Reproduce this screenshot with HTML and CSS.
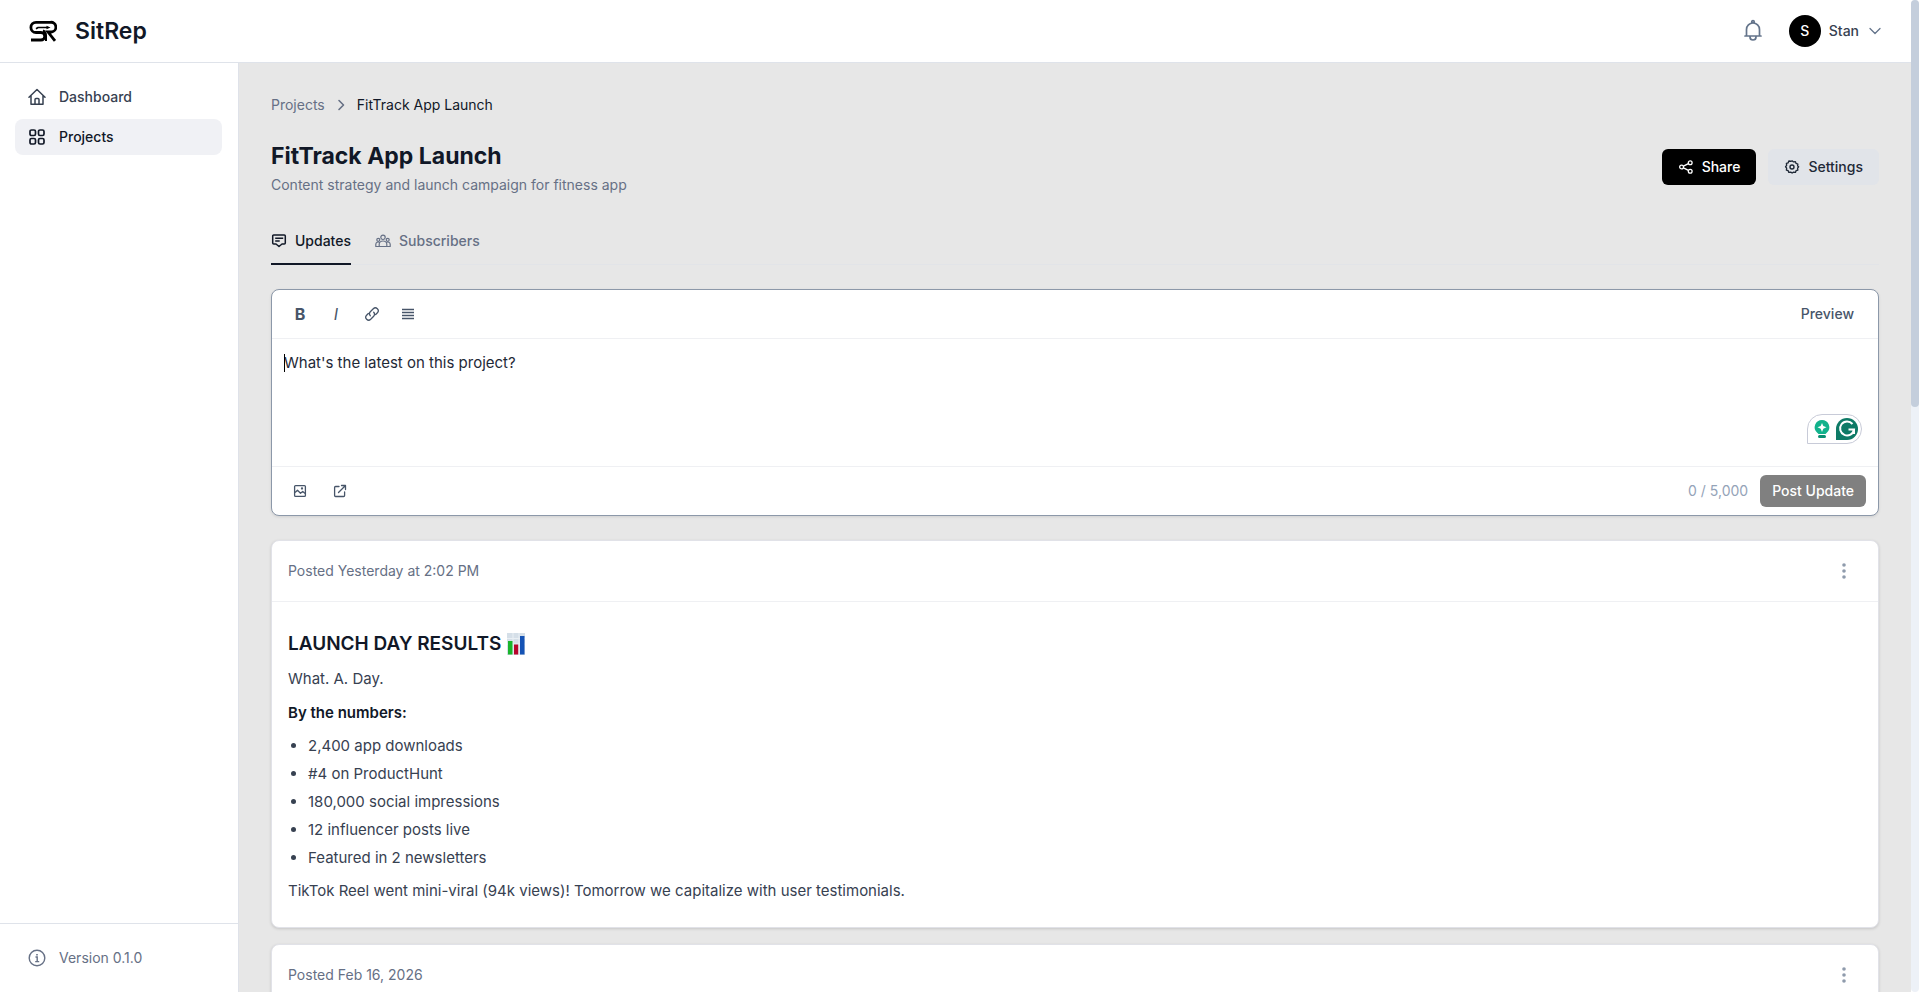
FILE: index.html
```html
<!DOCTYPE html>
<html lang="en">
<head>
    <meta charset="UTF-8">
    <meta name="viewport" content="width=device-width, initial-scale=1.0">
    <title>FitTrack App Launch - SitRep</title>
    <link rel="stylesheet" href="styles.css">
</head>
<body>
    <div class="app">
        <header class="topbar">
            <a class="brand" href="#">
                <svg class="logo" width="28" height="24" viewBox="0 0 28 24" fill="none" stroke="#000" aria-hidden="true">
                    <path d="M2 21h10a3.600 3.600 0 0 0 0-7.500H7a5 5 0 0 1 0-10.200H21.500a4.800 4.800 0 0 1 1 9.700H19L26 21.800" stroke-width="2.800"/>
                    <path d="M14 11.500a5.500 5.500 0 0 1 3 5V22" stroke-width="2"/>
                    <path d="M7 9.800l2-1.300h9" stroke-width="1.700"/>
                    <path d="M17.500 6.800l4 1.700-4 1.700z" fill="#000" stroke="none"/>
                </svg>
                <span class="brand-name">SitRep</span>
            </a>
            <div class="user-area">
                <button class="icon-btn bell" aria-label="Notifications">
                    <svg width="24" height="24" viewBox="0 0 24 24" fill="none" stroke="currentColor" stroke-width="1.700" stroke-linecap="round" stroke-linejoin="round"><path d="M4 17h16M5.500 17v-6.500a6.500 6.500 0 0 1 13 0V17M10.800 4V2.800a1.200 1.200 0 0 1 2.400 0V4M9 17.500v.5a3 3 0 0 0 6 0v-.5"/></svg>
                </button>
                <button class="user-menu">
                    <span class="avatar">S</span>
                    <span>Stan</span>
                    <svg class="caret-down" width="12" height="12" viewBox="0 0 12 12" fill="none" stroke="currentColor" stroke-width="1.300" stroke-linecap="round" stroke-linejoin="round"><path d="M1 3.500l5 5 5-5"/></svg>
                </button>
            </div>
        </header>
        <div class="layout">
            <aside class="sidebar">
                <nav class="nav">
                    <a class="nav-link" href="#">
                        <svg width="18" height="18" viewBox="0 0 18 18" fill="none" stroke="currentColor" stroke-width="1.500" stroke-linecap="round" stroke-linejoin="round"><path d="M1 9.200L9 1.500l8 7.700M3 7.500v8.800h12V7.500M7 16v-4.500a1 1 0 0 1 1-1h2a1 1 0 0 1 1 1V16"/></svg>
                        <span>Dashboard</span>
                    </a>
                    <a class="nav-link active" href="#">
                        <svg width="18" height="18" viewBox="0 0 18 18" fill="none" stroke="currentColor" stroke-width="1.700"><rect x="2" y="2" width="5.500" height="5.500" rx="1.500"/><rect x="10.500" y="2" width="5.500" height="5.500" rx="1.500"/><rect x="2" y="10.500" width="5.500" height="5.500" rx="1.500"/><rect x="10.500" y="10.500" width="5.500" height="5.500" rx="1.500"/></svg>
                        <span>Projects</span>
                    </a>
                </nav>
                <div class="version">
                    <svg width="18" height="18" viewBox="0 0 18 18" fill="none" stroke="currentColor" stroke-width="1.400"><circle cx="9" cy="9" r="7.800"/><path d="M7.500 8h1.700v4.500M7.200 12.600h4"/><path d="M9 5v1.600" stroke-width="1.600"/></svg>
                    <span>Version 0.1.0</span>
                </div>
            </aside>
            <main class="content">
                <nav class="breadcrumb" aria-label="Breadcrumb">
                    <a href="#">Projects</a>
                    <svg width="12" height="12" viewBox="0 0 12 12" fill="none" stroke="currentColor" stroke-width="1.600" stroke-linecap="round" stroke-linejoin="round"><path d="M4 1.500l4.500 4.500L4 10.500"/></svg>
                    <span class="current">FitTrack App Launch</span>
                </nav>
                <div class="page-head">
                    <div>
                        <h1>FitTrack App Launch</h1>
                        <p class="description">Content strategy and launch campaign for fitness app</p>
                    </div>
                    <div class="actions">
                        <button class="btn btn-dark">
                            <svg width="16" height="16" viewBox="0 0 16 16" fill="none" stroke="currentColor" stroke-width="1.300"><circle cx="3.600" cy="8" r="1.900"/><circle cx="12.200" cy="3.700" r="1.900"/><circle cx="12.200" cy="12.300" r="1.900"/><path d="M5.400 7.100l5-2.500M5.400 8.900l5 2.500"/></svg>
                            Share
                        </button>
                        <button class="btn btn-light">
                            <svg width="16" height="16" viewBox="0 0 16 16" fill="none" stroke="currentColor" stroke-width="1.400" stroke-linejoin="round"><circle cx="8" cy="8" r="2"/><path d="M8 1.700l1.500 1.200 2-.3.700 1.900 1.900.700-.3 2L15 8l-1.200 1.500.3 2-1.900.7-.7 1.900-2-.3L8 14.700l-1.500-1-2 .4-.7-1.900-1.900-.7.300-2L1 8l1.200-1.500-.3-2 1.900-.7.700-1.900 2 .3z" transform="translate(.6 .2) scale(.94)"/></svg>
                            Settings
                        </button>
                    </div>
                </div>
                <div class="tabs" role="tablist">
                    <button class="tab active" role="tab" aria-selected="true">
                        <svg width="16" height="16" viewBox="0 0 16 16" fill="none" stroke="currentColor" stroke-width="1.500" stroke-linejoin="round"><path d="M1.700 3a1 1 0 0 1 1-1h10.600a1 1 0 0 1 1 1v7a1 1 0 0 1-1 1h-2.300L8 13.500 5 11H2.700a1 1 0 0 1-1-1zM4.200 5.200h8M4.200 7.900h4.500"/></svg>
                        Updates
                    </button>
                    <button class="tab" role="tab" aria-selected="false">
                        <svg width="16" height="16" viewBox="0 0 16 16" fill="none" stroke="currentColor" stroke-width="1.200" stroke-linejoin="round"><circle cx="8" cy="4.300" r="2.200"/><circle cx="3.300" cy="6.800" r="1.500"/><circle cx="12.700" cy="6.800" r="1.500"/><path d="M4.200 13.500v-2.200a3.800 3.300 0 0 1 7.600 0v2.200zM4 13.500H.8v-2.300A2.400 2.400 0 0 1 4.300 9.300M12 13.500h3.200v-2.300a2.400 2.400 0 0 0-3.500-1.900"/></svg>
                        Subscribers
                    </button>
                </div>

                <section class="editor">
                    <div class="editor-bar">
                        <div class="tools">
                            <button class="tool bold" aria-label="Bold">B</button>
                            <button class="tool italic" aria-label="Italic">I</button>
                            <button class="tool" aria-label="Link">
                                <svg width="16" height="16" viewBox="0 0 16 16" fill="none" stroke="currentColor" stroke-width="1.300" stroke-linecap="round"><path d="M6.300 9.700a2.800 2.800 0 0 1 0-4l3-3a2.900 2.900 0 0 1 4.100 4.100l-1.700 1.700M9.700 6.300a2.800 2.800 0 0 1 0 4l-3 3a2.900 2.900 0 0 1-4.100-4.100l1.700-1.700"/></svg>
                            </button>
                            <button class="tool" aria-label="List">
                                <svg width="16" height="16" viewBox="0 0 16 16" fill="none" stroke="currentColor" stroke-width="1.300"><path d="M2 3.500h12M2 6.500h12M2 9.500h12M2 12.500h12"/></svg>
                            </button>
                        </div>
                        <button class="preview">Preview</button>
                    </div>
                    <div class="editor-body">
                        <textarea class="editor-input" aria-label="Project update" placeholder="What's the latest on this project?"></textarea>
                        <span class="text-caret"></span>
                        <div class="assistant">
                            <svg width="18" height="20" viewBox="0 0 18 20" aria-hidden="true"><path d="M9 1a7.300 7.300 0 0 0-5 12.600l1.500 1.400h7l1.500-1.400A7.300 7.300 0 0 0 9 1z" fill="#12b28c"/><rect x="5" y="16" width="8" height="3" rx="1.500" fill="#0b8f72"/><path d="M9 4l1.300 3L13.500 8.300l-3.200 1.400L9 13l-1.300-3.300-3.200-1.400L7.700 7z" fill="#fff"/></svg>
                            <svg width="22" height="22" viewBox="0 0 22 22" aria-hidden="true"><path d="M0 22V11a11 11 0 1 1 11 11z" fill="#0e7a66"/><path d="M16.500 6A7 7 0 1 0 18 11.500h-5.500M18 11.500V16" fill="none" stroke="#fff" stroke-width="2"/></svg>
                        </div>
                    </div>
                    <div class="editor-bar editor-footer">
                        <div class="tools attach">
                            <button class="tool" aria-label="Add image">
                                <svg width="16" height="16" viewBox="0 0 16 16" fill="none" stroke="currentColor" stroke-width="1.300" stroke-linejoin="round"><rect x="2.600" y="2.600" width="10.800" height="10.800" rx="1"/><path d="M3 9.500l2.500-2.300 3 3 2.200-1.700 2.500 2"/><circle cx="10" cy="5.500" r=".5"/></svg>
                            </button>
                            <button class="tool" aria-label="Add external link">
                                <svg width="16" height="16" viewBox="0 0 16 16" fill="none" stroke="currentColor" stroke-width="1.300" stroke-linecap="round" stroke-linejoin="round"><path d="M7 3.500H3.600a1 1 0 0 0-1 1v8a1 1 0 0 0 1 1h8a1 1 0 0 0 1-1V9M9.500 2.500h4v4M13.500 2.500L6.500 9.500"/></svg>
                            </button>
                        </div>
                        <div class="submit">
                            <span class="counter">0 / 5,000</span>
                            <button class="post-btn" disabled>Post Update</button>
                        </div>
                    </div>
                </section>

                <div class="feed">
                    <article class="post">
                        <header class="post-head">
                            <span>Posted Yesterday at 2:02 PM</span>
                            <button class="more" aria-label="More options">
                                <svg width="4" height="16" viewBox="0 0 4 16" fill="currentColor"><circle cx="2" cy="2" r="1.800"/><circle cx="2" cy="8" r="1.800"/><circle cx="2" cy="14" r="1.800"/></svg>
                            </button>
                        </header>
                        <div class="post-body">
                            <h2>LAUNCH DAY RESULTS
                                <svg class="chart" width="18" height="22" viewBox="0 0 18 22" role="img" aria-label="bar chart"><path d="M0 0h18v22H0z" fill="#d5dfe8"/><path d="M0 5.500h18M0 11h18M6 0v22M12 0v22" stroke="#e9eff4"/><path d="M1 8h4.500v13.500H1z" fill="#19b52c"/><path d="M7 11.500h4.200v10H7z" fill="#b8042c"/><path d="M13 3h4.500v18.500H13z" fill="#1553b5"/></svg>
                            </h2>
                            <p>What. A. Day.</p>
                            <p><strong>By the numbers:</strong></p>
                            <ul>
                                <li>2,400 app downloads</li>
                                <li>#4 on ProductHunt</li>
                                <li>180,000 social impressions</li>
                                <li>12 influencer posts live</li>
                                <li>Featured in 2 newsletters</li>
                            </ul>
                            <p>TikTok Reel went mini-viral (94k views)! Tomorrow we capitalize with user testimonials.</p>
                        </div>
                    </article>
                    <article class="post">
                        <header class="post-head">
                            <span>Posted Feb 16, 2026</span>
                            <button class="more" aria-label="More options">
                                <svg width="4" height="16" viewBox="0 0 4 16" fill="currentColor"><circle cx="2" cy="2" r="1.800"/><circle cx="2" cy="8" r="1.800"/><circle cx="2" cy="14" r="1.800"/></svg>
                            </button>
                        </header>
                    </article>
                </div>
            </main>
        </div>
    </div>
    <div class="scroll-track"><div class="scroll-thumb"></div></div>
</body>
</html>
```
FILE: styles.css
```css
* {
    box-sizing: border-box;
}
body {
    margin: 0;
    height: 100vh;
    display: flex;
    overflow: hidden;
    font-family: Inter, "Liberation Sans", sans-serif;
    font-size: 14px;
    line-height: 20px;
    color: #111827;
    background: white;
}
button {
    font: inherit;
    color: inherit;
    border: none;
    background: none;
    padding: 0;
    cursor: pointer;
}
a {
    color: inherit;
    text-decoration: none;
}
svg {
    display: block;
    flex-shrink: 0;
}
h1, h2, p, ul {
    margin: 0;
}
.app {
    flex: 1;
    min-width: 0;
    display: flex;
    flex-direction: column;
}

/* top bar */
.topbar {
    flex-shrink: 0;
    display: flex;
    justify-content: space-between;
    align-items: center;
    padding: 15px 30px 15px 29px;
    border-bottom: 1px solid #dfe3ea;
}
.brand {
    display: flex;
    align-items: center;
    gap: 18px;
}
.brand-name {
    font-size: 23px;
    font-weight: 600;
    line-height: 32px;
}
.user-area {
    display: flex;
    align-items: center;
    gap: 24px;
}
.bell {
    color: #64748b;
}
.user-menu {
    display: flex;
    align-items: center;
    gap: 8px;
    font-weight: 500;
    color: #374151;
}
.avatar {
    width: 32px;
    line-height: 32px;
    border-radius: 50%;
    background: black;
    color: white;
}
.caret-down {
    margin-left: 2px;
    color: #64748b;
}

/* sidebar */
.layout {
    flex: 1;
    min-height: 0;
    display: flex;
}
.sidebar {
    width: 239px;
    flex-shrink: 0;
    display: flex;
    flex-direction: column;
    justify-content: space-between;
    border-right: 1px solid #dfe2e9;
}
.nav {
    display: flex;
    flex-direction: column;
    gap: 4px;
    padding: 16px 16px 16px 15px;
}
.nav-link {
    display: flex;
    align-items: center;
    gap: 13px;
    padding: 8px 13px;
    border-radius: 8px;
    font-weight: 500;
    color: #374151;
}
.nav-link.active {
    background: #f0f1f5;
    color: #111827;
}
.version {
    display: flex;
    align-items: center;
    gap: 13px;
    padding: 24px 28px;
    border-top: 1px solid #dfe3ea;
    color: #667085;
}

/* page */
.content {
    flex: 1;
    min-width: 0;
    overflow: hidden;
    padding: 32px;
    background: #e7e7e7;
}
.breadcrumb {
    display: flex;
    align-items: center;
    gap: 10px;
    color: #667085;
}
.breadcrumb .current {
    color: #111827;
}
.page-head {
    display: flex;
    justify-content: space-between;
    align-items: center;
    margin-top: 24px;
}
.page-head h1 {
    font-size: 23px;
    font-weight: 700;
    line-height: 34px;
}
.description {
    margin-top: 2px;
    color: #667085;
}
.actions {
    display: flex;
    gap: 12px;
}
.btn {
    display: flex;
    align-items: center;
    gap: 8px;
    padding: 8px 16px;
    border-radius: 6px;
    font-weight: 500;
}
.btn-dark {
    background: black;
    color: white;
}
.btn-light {
    background: #e1e4e9;
    color: #1f2937;
}
.tabs {
    display: flex;
    gap: 24px;
    margin-top: 24px;
    border-bottom: 1px solid #e2e4e8;
}
.tab {
    display: flex;
    align-items: center;
    gap: 8px;
    margin-bottom: -1px;
    padding: 12px 0;
    border-bottom: 2px solid transparent;
    font-weight: 500;
    color: #667085;
}
.tab.active {
    color: #111827;
    border-color: #111827;
}

/* update editor */
.editor {
    margin-top: 24px;
    background: white;
    border: 1px solid #8c98a9;
    border-radius: 8px;
    box-shadow: 0 1px 3px rgba(0, 0, 0, 0.1);
}
.editor-bar {
    display: flex;
    justify-content: space-between;
    align-items: center;
    padding: 8px 12px;
    border-bottom: 1px solid #eff0f3;
    color: #475569;
}
.editor-footer {
    border-bottom: none;
    border-top: 1px solid #eff0f3;
}
.tools {
    display: flex;
    gap: 4px;
}
.attach {
    gap: 8px;
}
.tool {
    width: 32px;
    height: 32px;
    display: flex;
    align-items: center;
    justify-content: center;
    font-size: 16px;
}
.bold {
    font-weight: 700;
}
.italic {
    font-style: italic;
}
.preview {
    padding: 6px 12px;
    font-weight: 500;
}
.editor-body {
    position: relative;
}
.editor-input {
    display: block;
    width: 100%;
    height: 127px;
    padding: 12px;
    border: none;
    outline: none;
    resize: none;
    background: transparent;
    font: inherit;
    font-size: 15px;
    line-height: 24px;
}
.editor-input::placeholder {
    color: #1f2937;
    opacity: 1;
}
.text-caret {
    position: absolute;
    left: 12px;
    top: 15px;
    width: 1px;
    height: 18px;
    background: black;
}
.assistant {
    position: absolute;
    right: 16px;
    bottom: 22px;
    display: flex;
    align-items: center;
    gap: 5px;
    height: 30px;
    padding: 0 3px 0 5px;
    border: 1px solid #c8cbd8;
    border-radius: 15px 15px 15px 0;
    background: white;
}
.submit {
    display: flex;
    align-items: center;
    gap: 12px;
}
.counter {
    color: #94a3b8;
}
.post-btn {
    padding: 6px 12px;
    border-radius: 6px;
    background: #808080;
    color: white;
    font-weight: 500;
}

/* posts */
.feed {
    display: flex;
    flex-direction: column;
    gap: 16px;
    margin-top: 24px;
}
.post {
    background: white;
    border: 1px solid #e1e2e8;
    border-radius: 8px;
    box-shadow: 0 1px 3px rgba(0, 0, 0, 0.15);
}
.post-head {
    display: flex;
    justify-content: space-between;
    align-items: center;
    padding: 14px 16px;
    border-bottom: 1px solid #eff0f3;
    color: #667085;
}
.more {
    padding: 8px 16px;
    color: #8f9bac;
}
.post-body {
    padding: 28px 16px 24px;
    font-size: 15px;
    line-height: 24px;
    color: #374151;
}
.post-body h2 {
    display: flex;
    align-items: center;
    gap: 6px;
    margin-bottom: 9px;
    font-size: 19px;
    font-weight: 600;
    line-height: 28px;
    color: #111827;
}
.post-body p + p {
    margin-top: 10px;
}
.post-body ul, .post-body ul + p {
    margin-top: 9px;
}
.post-body strong {
    font-weight: 600;
    color: #111827;
}
.post-body ul {
    padding-left: 20px;
}
.post-body li + li {
    margin-top: 4px;
}

/* scroll indicator */
.scroll-track {
    width: 8px;
    flex-shrink: 0;
    border-radius: 4px;
    background: #edf1f7;
}
.scroll-thumb {
    height: 41%;
    border-radius: 4px;
    background: #c4cedc;
}
```
